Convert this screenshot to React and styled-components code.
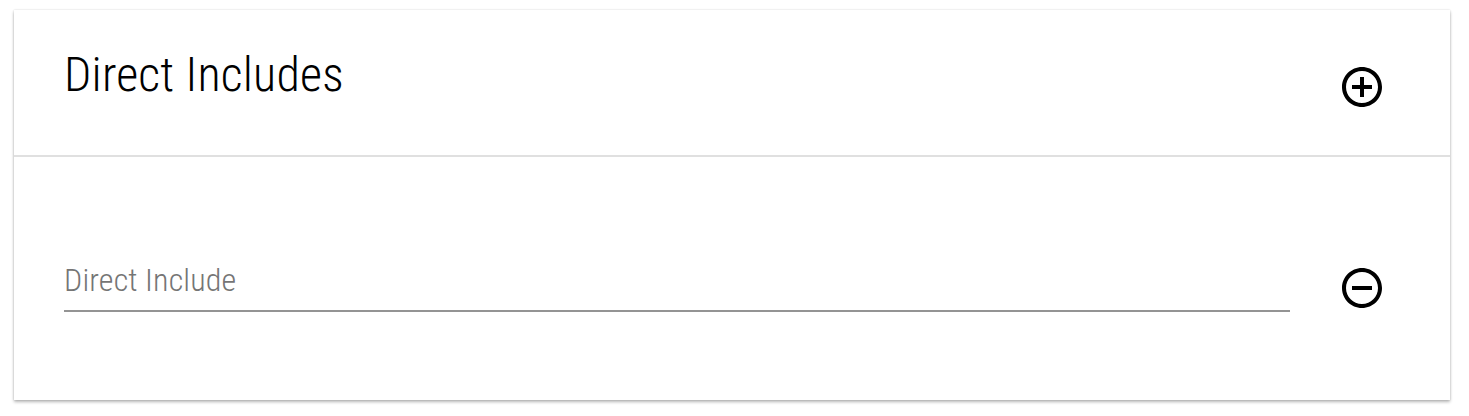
import React from "react";
import styled, { createGlobalStyle } from "styled-components";

const Global = createGlobalStyle`
  html, body { margin: 0; padding: 0; background: #ffffff; }
  body { font-family: "Roboto Condensed", Roboto, "Noto Sans", sans-serif; min-height: 416px; }
  #root { padding-top: 10px; padding-bottom: 16px; }
`;

const Card = styled.section`
  margin: 0 19px 0 14px;
  height: 390px;
  background: #fff;
  box-shadow: 0 2px 3px rgba(0, 0, 0, 0.28), 0 0 2px rgba(0, 0, 0, 0.14);
  display: flex;
  flex-direction: column;
`;

const Header = styled.header`
  height: 147px;
  box-sizing: border-box;
  border-bottom: 2px solid #e0e0e0;
  display: flex;
  align-items: flex-start;
  padding: 0 40px 0 50px;
`;

const Title = styled.h2`
  flex: 1;
  margin: 41px 0 0;
  font-family: "Roboto Condensed", Roboto, sans-serif;
  font-stretch: 75%;
  font-weight: 300;
  font-size: 48px;
  line-height: 48px;
  letter-spacing: 0.2px;
  color: #000;
`;

const IconButton = styled.button`
  width: 96px;
  height: 96px;
  padding: 24px;
  margin: ${(p) => p.$top}px 0 0 ${(p) => p.$left}px;
  border: none;
  background: transparent;
  border-radius: 50%;
  display: flex;
  align-items: center;
  justify-content: center;
  cursor: pointer;
  flex-shrink: 0;
  svg { width: 48px; height: 48px; display: block; fill: #000; }
`;

const Body = styled.div`
  flex: 1;
  display: flex;
  align-items: flex-start;
  padding: 83px 40px 0 50px;
`;

const Field = styled.div`
  flex: 1;
  margin-top: 24px;
  padding-bottom: 14px;
  border-bottom: 2px solid #949494;
`;

const Placeholder = styled.div`
  font-family: "Roboto Condensed", Roboto, sans-serif;
  font-stretch: 75%;
  font-weight: 300;
  font-size: 32px;
  line-height: 32px;
  letter-spacing: 0.15px;
  color: #757575;
`;

const AddIcon = () => (
  <svg viewBox="0 0 24 24">
    <path d="M13 7h-2v4H7v2h4v4h2v-4h4v-2h-4V7zm-1-5C6.48 2 2 6.48 2 12s4.48 10 10 10 10-4.48 10-10S17.52 2 12 2zm0 18c-4.41 0-8-3.59-8-8s3.59-8 8-8 8 3.59 8 8-3.59 8-8 8z" />
  </svg>
);

const RemoveIcon = () => (
  <svg viewBox="0 0 24 24">
    <path d="M7 11v2h10v-2H7zm5-9C6.48 2 2 6.48 2 12s4.48 10 10 10 10-4.48 10-10S17.52 2 12 2zm0 18c-4.41 0-8-3.59-8-8s3.59-8 8-8 8 3.59 8 8-3.59 8-8 8z" />
  </svg>
);

export default function App() {
  return (
    <>
      <Global />
      <Card>
        <Header>
          <Title>Direct Includes</Title>
          <IconButton $top={29} $left={0} aria-label="Add">
            <AddIcon />
          </IconButton>
        </Header>
        <Body>
          <Field>
            <Placeholder>Direct Include</Placeholder>
          </Field>
          <IconButton $top={0} $left={24} aria-label="Remove">
            <RemoveIcon />
          </IconButton>
        </Body>
      </Card>
    </>
  );
}
